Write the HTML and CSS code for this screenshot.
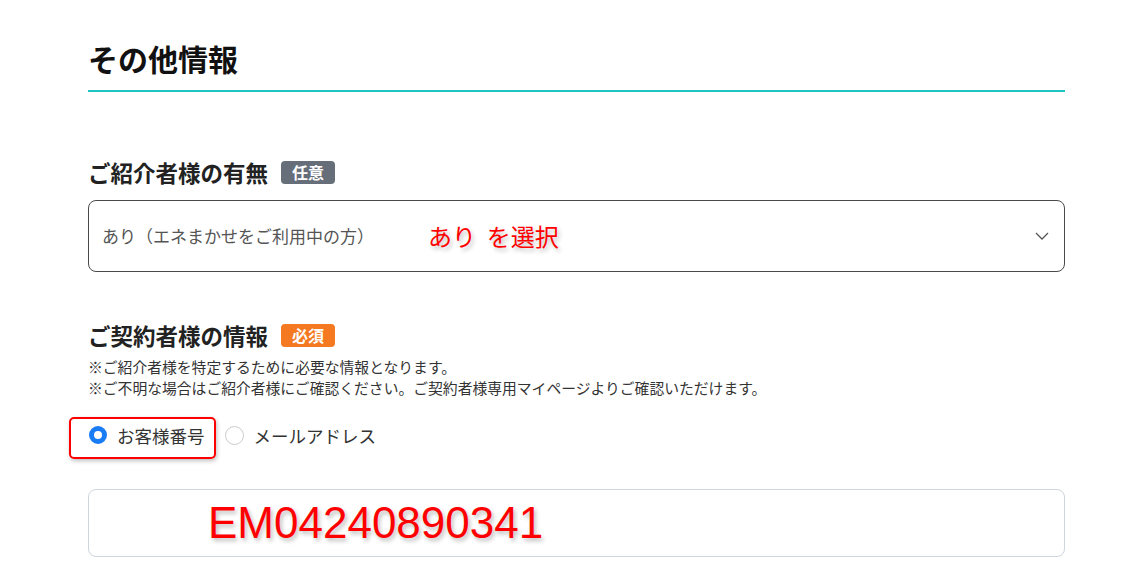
FILE: index.html
```html
<!DOCTYPE html>
<html lang="ja">
<head>
    <meta charset="UTF-8">
    <meta name="viewport" content="width=device-width, initial-scale=1.0">
    <title>その他情報</title>
    <link rel="stylesheet" href="styles.css">
</head>
<body>
    <main class="form">
        <h2 class="form-title">その他情報</h2>

        <div class="field field-referrer">
            <div class="field-label">ご紹介者様の有無 <span class="badge badge-optional">任意</span></div>
            <div class="select-box">
                <span class="select-value">あり（エネまかせをご利用中の方）</span>
                <span class="note-red note-select">あり&nbsp;&nbsp;を選択</span>
                <svg class="chevron" width="14" height="8" viewBox="0 0 14 8"><path d="M1 1l6 6 6-6" fill="none" stroke="#555" stroke-width="1.3"/></svg>
            </div>
        </div>

        <div class="field field-contract">
            <div class="field-label">ご契約者様の情報 <span class="badge badge-required">必須</span></div>
            <p class="help">※ご紹介者様を特定するために必要な情報となります。<br>※ご不明な場合はご紹介者様にご確認ください。ご契約者様専用マイページよりご確認いただけます。</p>
            <div class="radios">
                <label class="radio radio-marked"><span class="dot dot-on"></span>お客様番号</label>
                <label class="radio radio-plain"><span class="dot"></span>メールアドレス</label>
            </div>
            <div class="text-box">
                <span class="note-red note-number">EM04240890341</span>
            </div>
        </div>
    </main>
</body>
</html>
```

FILE: styles.css
```css
body {
    margin: 0;
    background-color: #fff;
    color: #222;
    font-family: "Noto Sans CJK JP", "Noto Sans", sans-serif;
}
.form {
    width: 977px;
    margin-left: 88px;
    padding-top: 35px;
}
.form-title {
    margin: 0;
    font-size: 30px;
    font-weight: 700;
    line-height: 46px;
    padding-bottom: 9px;
    border-bottom: 2px solid #1ec4c0;
    color: #111;
}
.field-referrer {
    margin-top: 65px;
}
.field-label {
    display: flex;
    align-items: center;
    gap: 13px;
    font-size: 22.5px;
    font-weight: 700;
    line-height: 30px;
}
.badge {
    display: inline-block;
    color: #fff;
    font-size: 16px;
    line-height: 23px;
    padding: 0 11px;
    border-radius: 4px;
}
.badge-optional {
    background-color: #666e7a;
}
.badge-required {
    background-color: #f47920;
}
.select-box {
    margin-top: 13px;
    height: 70px;
    border: 1px solid #4a4a4a;
    border-radius: 8px;
    display: flex;
    align-items: center;
    padding: 0 13px;
}
.select-value {
    font-size: 17px;
    color: #555;
    width: 326px;
    margin-top: -2px;
}
.note-red {
    color: #ff0000;
    text-shadow: 2px 3px 4px rgba(0, 0, 0, 0.25);
}
.note-select {
    font-size: 24px;
    flex-grow: 1;
    margin-top: -2px;
}
.chevron {
    margin-right: 2px;
}
.field-contract {
    margin-top: 48px;
}
.help {
    margin: 6px 0 0;
    font-size: 14.8px;
    line-height: 21px;
    color: #333;
}
.radios {
    display: flex;
    align-items: center;
    margin: 19px 0 0 -19px;
}
.radio {
    display: flex;
    align-items: center;
    gap: 10px;
    font-size: 17.5px;
    color: #333;
    box-sizing: border-box;
    height: 42px;
    padding: 0 9px 6px 18px;
    border: 2px solid transparent;
}
.radio-plain {
    padding-left: 7px;
}
.radio-marked {
    border-color: #ff0000;
    border-radius: 5px;
    box-shadow: 1px 2px 4px rgba(0, 0, 0, 0.25);
}
.dot {
    width: 19px;
    height: 19px;
    border-radius: 50%;
    border: 1px solid #ccc;
    box-sizing: border-box;
}
.dot-on {
    width: 18px;
    height: 18px;
    border: 5px solid #1a7cf5;
}
.text-box {
    margin-top: 30px;
    height: 66px;
    border: 1px solid #cfd5de;
    border-radius: 8px;
    display: flex;
    align-items: center;
    padding-left: 119px;
}
.note-number {
    font-family: "Liberation Sans", Arial, sans-serif;
    font-size: 44px;
}
```
